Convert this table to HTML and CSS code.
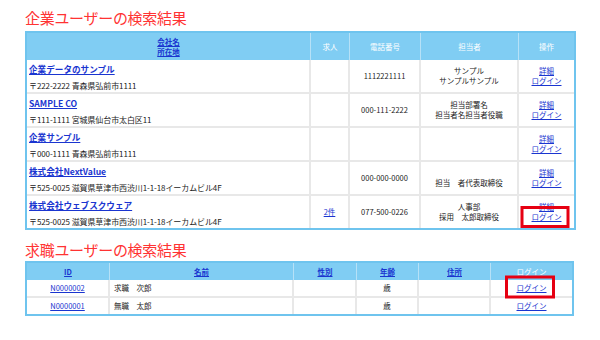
FILE: index.html
```html
<!DOCTYPE html>
<html lang="ja">
<head>
<meta charset="utf-8">
<link rel="stylesheet" href="styles.css">
</head>
<body>
<div class="wrap">
  <h2 class="ttl">企業ユーザーの検索結果</h2>
  <table class="grid corp">
    <colgroup><col class="c1"><col class="c2"><col class="c3"><col class="c4"><col class="c5"></colgroup>
    <thead>
      <tr><th><a href="#">会社名</a><br><a href="#">所在地</a></th><th>求人</th><th>電話番号</th><th>担当者</th><th>操作</th></tr>
    </thead>
    <tbody>
      <tr>
        <td class="co"><a class="nm" href="#">企業データのサンプル</a><div class="ad">〒222-2222 青森県弘前市1111</div></td>
        <td></td><td class="ct">1112221111</td><td class="ct">サンプル<br>サンプルサンプル</td>
        <td class="ct ops"><a href="#">詳細</a><br><a href="#">ログイン</a></td>
      </tr>
      <tr>
        <td class="co"><a class="nm" href="#">SAMPLE CO</a><div class="ad">〒111-1111 宮城県仙台市太白区11</div></td>
        <td></td><td class="ct">000-111-2222</td><td class="ct">担当部署名<br>担当者名担当者役職</td>
        <td class="ct ops"><a href="#">詳細</a><br><a href="#">ログイン</a></td>
      </tr>
      <tr>
        <td class="co"><a class="nm" href="#">企業サンプル</a><div class="ad">〒000-1111 青森県弘前市1111</div></td>
        <td></td><td></td><td></td>
        <td class="ct ops"><a href="#">詳細</a><br><a href="#">ログイン</a></td>
      </tr>
      <tr>
        <td class="co"><a class="nm" href="#">株式会社NextValue</a><div class="ad">〒525-0025 滋賀県草津市西渋川1-1-18イーカムビル4F</div></td>
        <td></td><td class="ct">000-000-0000</td><td class="ct"><br>担当　者代表取締役</td>
        <td class="ct ops"><a href="#">詳細</a><br><a href="#">ログイン</a></td>
      </tr>
      <tr>
        <td class="co"><a class="nm" href="#">株式会社ウェブスクウェア</a><div class="ad">〒525-0025 滋賀県草津市西渋川1-1-18イーカムビル4F</div></td>
        <td class="ct"><a href="#">2件</a></td><td class="ct">077-500-0226</td><td class="ct">人事部<br>採用　太郎取締役</td>
        <td class="ct ops"><a href="#">詳細</a><br><span class="hl hl1"><a href="#">ログイン</a></span></td>
      </tr>
    </tbody>
  </table>

  <h2 class="ttl ttl2">求職ユーザーの検索結果</h2>
  <table class="grid seek">
    <colgroup><col class="d1"><col class="d2"><col class="d3"><col class="d4"><col class="d5"><col class="d6"></colgroup>
    <thead>
      <tr><th><a href="#">ID</a></th><th><a href="#">名前</a></th><th><a href="#">性別</a></th><th><a href="#">年齢</a></th><th><a href="#">住所</a></th><th>ログイン</th></tr>
    </thead>
    <tbody>
      <tr><td class="ct"><a href="#">N0000002</a></td><td>求職　次郎</td><td></td><td class="ct">歳</td><td></td><td class="ct"><span class="hl hl2"><a href="#">ログイン</a></span></td></tr>
      <tr><td class="ct"><a href="#">N0000001</a></td><td>無職　太郎</td><td></td><td class="ct">歳</td><td></td><td class="ct"><a href="#">ログイン</a></td></tr>
    </tbody>
  </table>
</div>
</body>
</html>
```

FILE: styles.css
```css
body {
  margin: 0;
  background: #fff;
  font-family: "Noto Sans CJK JP", "Noto Sans", sans-serif;
  color: #222;
}
.wrap {
  padding: 8px 0 0 25px;
  width: 549px;
}
.ttl {
  margin: 0;
  font-size: 15px;
  line-height: 20px;
  height: 23px;
  font-weight: normal;
  color: #f33;
  letter-spacing: -0.3px;
}
.ttl2 {
  margin-top: 10px;
  height: 21px;
}
a {
  color: #1a35d0;
  text-decoration: underline;
}
.grid {
  width: 549px;
  table-layout: fixed;
  border-collapse: separate;
  border-spacing: 0;
  border: 2px solid #6fc4ee;
  font-size: 7.5px;
  line-height: 10px;
}
.grid th {
  background: #80cdf3;
  color: #fff;
  font-weight: normal;
  text-align: center;
  vertical-align: middle;
  border-right: 1px solid #b6e1f7;
  padding: 0 2px;
}
.grid th:last-child { border-right: 0; }
.grid th a { color: #1a35d0; font-weight: bold; }
.grid td {
  border-right: 2px solid #e8e8e8;
  border-bottom: 2px solid #e8e8e8;
  padding: 0 4px;
  vertical-align: middle;
  text-align: left;
}
.grid td:last-child { border-right: 0; }
.grid tbody tr:last-child td { border-bottom: 0; }
.grid .ct { text-align: center; }

.corp thead tr { height: 27px; }
.corp tbody tr { height: 34px; }
.corp tbody tr:last-child { height: 32px; }
.corp .c1 { width: 284px; }
.corp .c2 { width: 39px; }
.corp .c3 { width: 71px; }
.corp .c4 { width: 98px; }
.corp .c5 { width: 55px; }
.grid td.co { padding-left: 2px; }
.nm {
  display: block;
  font-size: 8.6px;
  font-weight: bold;
  line-height: 12px;
  margin-top: 1px;
  white-space: nowrap;
}
.ad {
  margin-top: 5px;
  line-height: 11px;
  white-space: nowrap;
  font-size: 8px;
  letter-spacing: -0.1px;
}
.ops a { line-height: 10px; }

.seek thead tr { height: 17px; }
.seek tbody tr { height: 18px; }
.seek tbody tr:last-child { height: 16px; }
.seek .d1 { width: 83px; }
.seek .d2 { width: 184px; }
.seek .d3 { width: 63px; }
.seek .d4 { width: 62px; }
.seek .d5 { width: 72px; }
.seek .d6 { width: 81px; }

.hl { position: relative; display: inline-block; }
.hl::after {
  content: "";
  position: absolute;
  left: 50%;
  top: 50%;
  transform: translate(-50%, -50%);
  border: 3px solid #e60012;
  box-sizing: border-box;
}
.hl1::after { width: 49px; height: 22px; margin-left: -2px; }
.hl2::after { width: 50px; height: 23px; margin-left: -2px; margin-top: -1px; }
```
